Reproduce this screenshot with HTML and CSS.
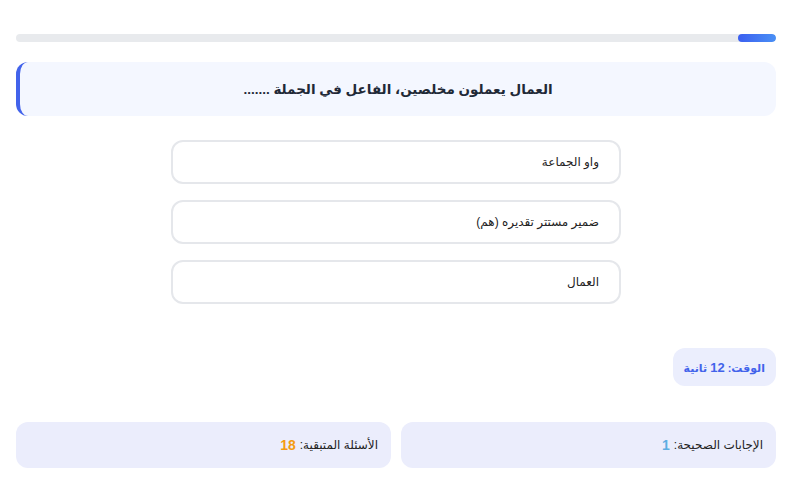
FILE: index.html
```html
<!DOCTYPE html>
<html lang="ar" dir="rtl">
<head>
<meta charset="utf-8">
<link rel="stylesheet" href="styles.css">
</head>
<body>
<div class="quiz">
  <div class="progress"><div class="progress-fill" style="width:5%"></div></div>
  <div class="question">العمال يعملون مخلصين، الفاعل في الجملة .......</div>
  <div class="options">
    <div class="option">واو الجماعة</div>
    <div class="option">ضمير مستتر تقديره (هم)</div>
    <div class="option">العمال</div>
  </div>
  <div class="timer-row"><div class="timer"><span>الوقت: <span class="tnum">12</span> ثانية</span></div></div>
  <div class="stats">
    <div class="stat">الإجابات الصحيحة: <span class="num correct">1</span></div>
    <div class="stat">الأسئلة المتبقية: <span class="num remaining">18</span></div>
  </div>
</div>
</body>
</html>
```
FILE: styles.css
```css
* { box-sizing: border-box; }
html, body { margin: 0; padding: 0; background: #fff; }
body { font-family: Arial, "Liberation Sans", "DejaVu Sans", sans-serif; color: #222; }
.quiz { width: 760px; margin: 0 20px 0 16px; padding-top: 34px; }
.progress { height: 8px; background: #e8eaed; border-radius: 4px; overflow: hidden; display: flex; }
.progress-fill { height: 100%; background: linear-gradient(to right, #3b5ff0, #4a90f5); border-radius: 4px; }
.question { margin-top: 20px; height: 54px; background: #f4f7ff; border-left: 4px solid #4263eb; border-radius: 12px; display: flex; align-items: center; justify-content: center; font-weight: bold; font-size: 13.5px; color: #1f2937; }
.options { width: 450px; margin: 24px auto 0; display: flex; flex-direction: column; gap: 16px; }
.option { height: 44px; border: 2px solid #e5e7eb; border-radius: 12px; display: flex; align-items: center; padding: 0 20px; font-size: 12px; color: #222; background: #fff; }
.timer-row { display: flex; margin-top: 44px; }
.timer { height: 38px; padding: 0 11px; background: #ebeefd; border-radius: 12px; display: flex; align-items: center; color: #4263eb; font-weight: bold; font-size: 11px; }
.tnum { font-size: 13px; }
.stats { display: flex; gap: 10px; margin-top: 36px; }
.stat { flex: 1; height: 46px; background: #ebedfc; border-radius: 12px; display: flex; align-items: center; padding: 0 13px; font-size: 12px; color: #222; }
.num { font-weight: bold; font-size: 14px; margin-right: 4px; }
.correct { color: #5dade2; }
.remaining { color: #f39c12; }
```
